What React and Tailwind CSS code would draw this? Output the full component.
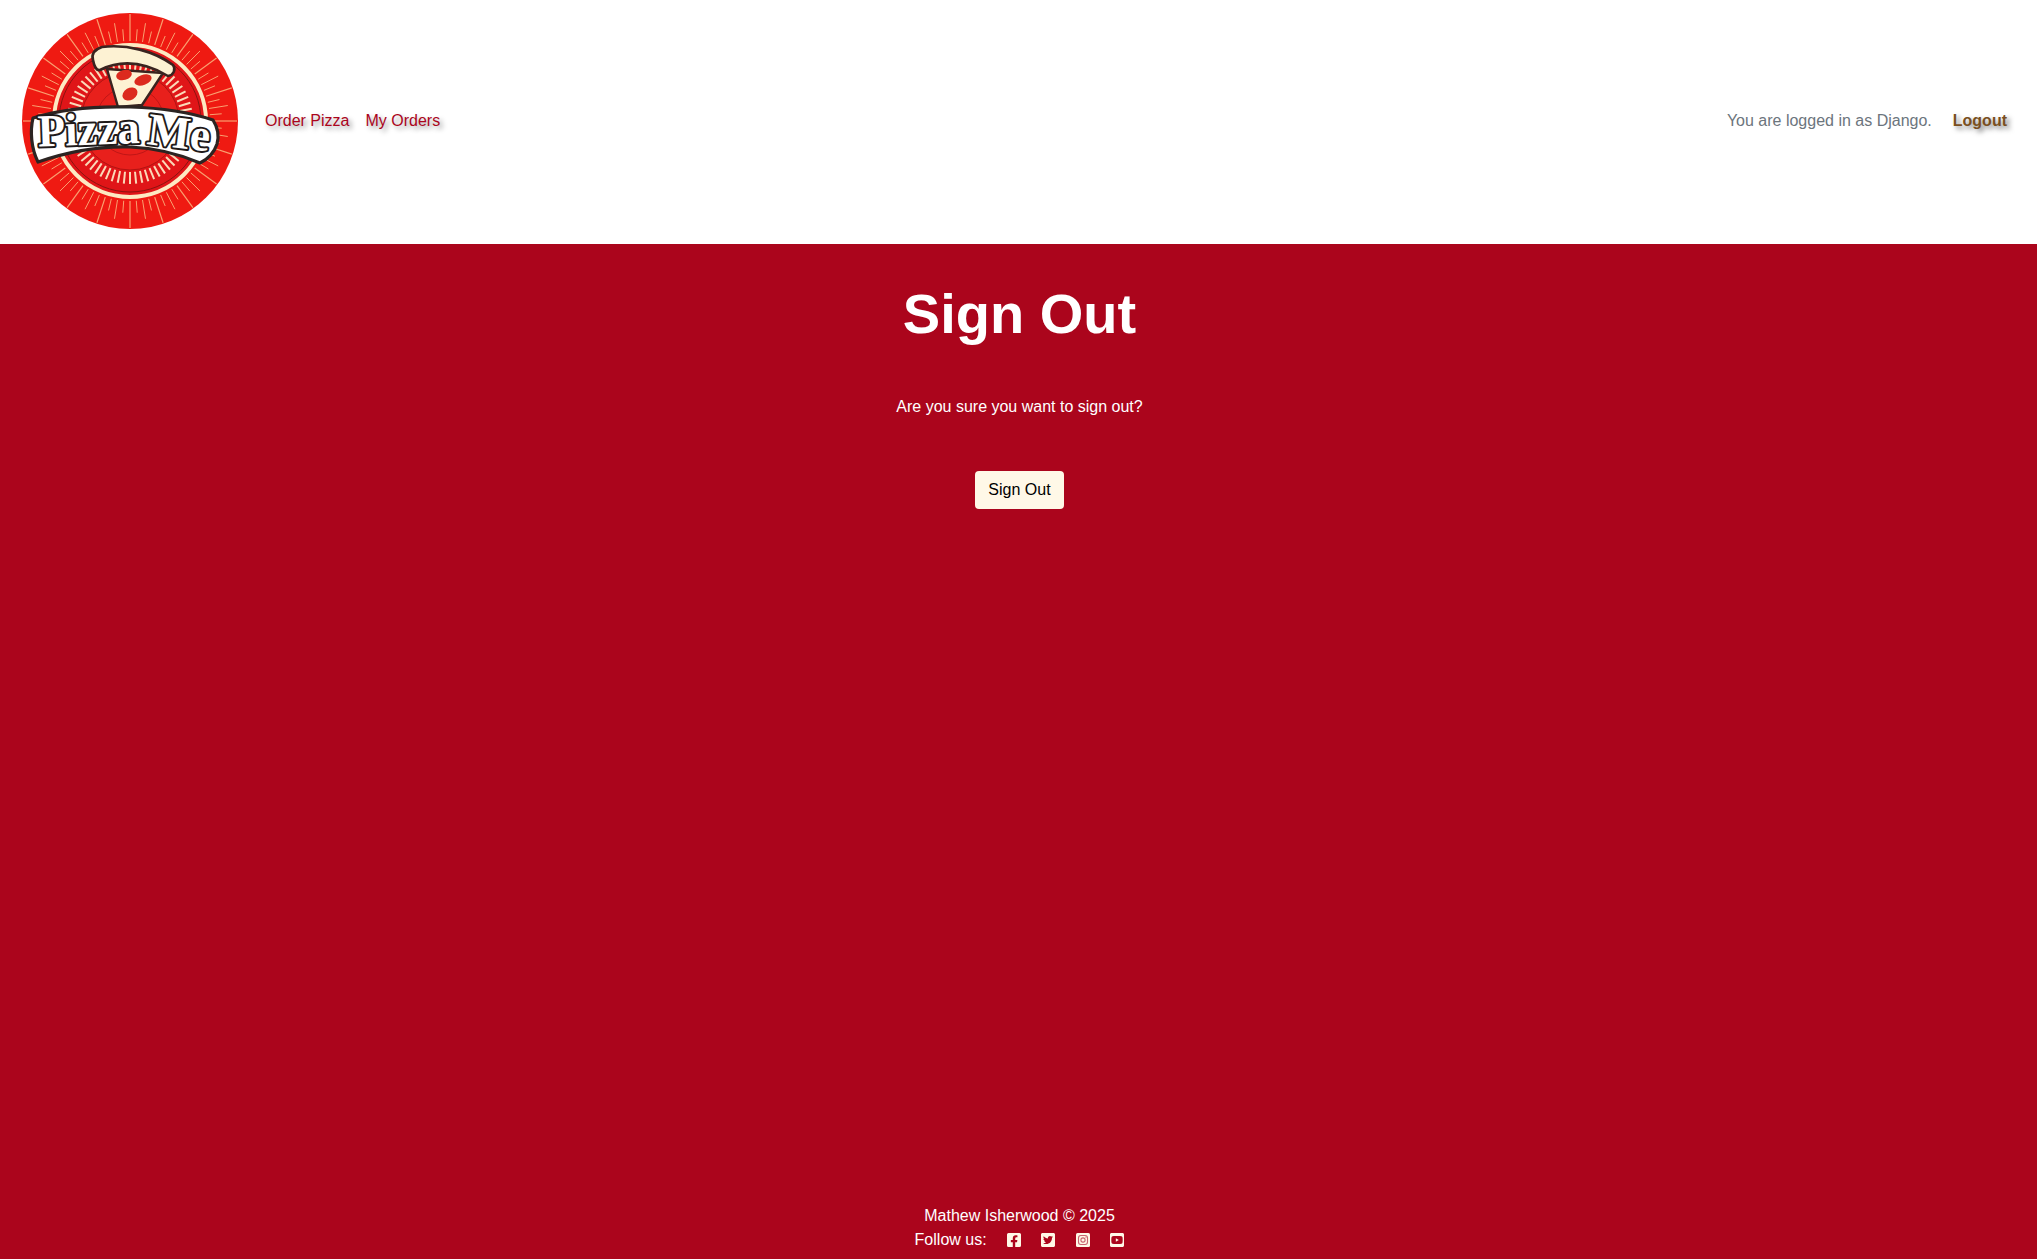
import React from "react";
import { FaFacebookSquare, FaTwitterSquare, FaYoutubeSquare } from "react-icons/fa";

function Insta() {
  return (
    <svg viewBox="0 0 14 14" className="w-[14px] h-[14px]">
      <rect width="14" height="14" rx="1.5" fill="#fff8e7" />
      <rect x="2.5" y="2.5" width="9" height="9" rx="2.4" fill="none" stroke="#c9626f" strokeWidth="1.1" />
      <circle cx="7" cy="7" r="2.1" fill="none" stroke="#c9626f" strokeWidth="1.1" />
      <circle cx="9.9" cy="4.1" r="0.6" fill="#c9626f" />
    </svg>
  );
}

function Logo() {
  const rays = [];
  for (let i = 0; i < 80; i++) {
    const a = (i * 4.5 * Math.PI) / 180;
    const long = i % 4 === 0;
    const mid = i % 2 === 0;
    const r1 = 80;
    const r2 = long ? 107 : mid ? 99 : 92;
    rays.push(
      <line key={i} x1={108 + r1 * Math.cos(a)} y1={108 + r1 * Math.sin(a)} x2={108 + r2 * Math.cos(a)} y2={108 + r2 * Math.sin(a)}
        stroke="#f9a070" strokeWidth={long ? 1.2 : 1} />
    );
  }
  const ticks = [];
  for (let i = 0; i < 64; i++) {
    const a = (i * 5.625 * Math.PI) / 180;
    ticks.push(
      <line key={i} x1={108 + 51 * Math.cos(a)} y1={108 + 51 * Math.sin(a)} x2={108 + 63 * Math.cos(a)} y2={108 + 63 * Math.sin(a)}
        stroke="#fbd9b8" strokeWidth="2" />
    );
  }
  return (
    <svg viewBox="0 0 216 216" className="w-[216px] h-[216px] shrink-0">
      <circle cx="108" cy="108" r="108" fill="#ef1a12" />
      {rays}
      <circle cx="108" cy="108" r="76" fill="#e01518" stroke="#fde9c2" strokeWidth="4" />
      <circle cx="108" cy="108" r="71" fill="none" stroke="#8a1410" strokeWidth="1" />
      {ticks}
      <circle cx="108" cy="108" r="49" fill="#e8201c" stroke="#b01412" strokeWidth="1" />
      <circle cx="108" cy="108" r="34" fill="none" stroke="#c01616" strokeWidth="1" />
      <path d="M85 56 L141 60 L120 92 L96 94 Z" fill="#fdf2d3" stroke="#3a2420" strokeWidth="2.4" strokeLinejoin="round" />
      <path d="M71 47 C69 40 74 36 80 34 C105 31 132 38 151 52 C154 56 152 62 146 63 C124 50 100 46 78 57 C74 58 72 52 71 47 Z" fill="#fdf2d3" stroke="#3a2420" strokeWidth="2.6" />
      <ellipse cx="102" cy="62" rx="8" ry="5" fill="#dc2a1e" transform="rotate(-15 102 62)" />
      <ellipse cx="121" cy="67" rx="9" ry="5" fill="#dc2a1e" transform="rotate(-20 121 67)" />
      <ellipse cx="108" cy="81" rx="8" ry="6" fill="#dc2a1e" transform="rotate(-30 108 81)" />
      <path d="M11 105 C40 96 75 93 108 94 C140 95 170 100 191 107 C196 115 197 124 195 131 C192 140 186 146 178 150 C155 140 132 135 108 134 C78 133 45 139 16 149 C9 135 8 118 11 105 Z" fill="#fff" stroke="#2c2422" strokeWidth="3.2" strokeLinejoin="round" />
      <g fontFamily="'Liberation Serif', serif" fontWeight="700" fill="#fff" stroke="#1f1a1a" strokeLinejoin="round" className="[paint-order:stroke]">
        <text x="16" y="132" fontSize="46" strokeWidth="4" textLength="102" lengthAdjust="spacingAndGlyphs" transform="rotate(-2 60 125)">Pizza</text>
        <text x="125" y="134" fontSize="46" strokeWidth="4" textLength="63" lengthAdjust="spacingAndGlyphs" transform="rotate(7 150 125)">Me</text>
      </g>
    </svg>
  );
}

export default function App() {
  return (
    <div className="min-h-[1259px] flex flex-col bg-[#ab051c] text-white text-base font-['Liberation_Sans',Arial,sans-serif]">
      <header className="h-[244px] bg-white flex items-center pl-[22px] pr-[30px] pb-[2px]">
        <Logo />
        <nav className="flex items-center gap-[16px] ml-[27px]">
          <a className="text-[#ab051c] [text-shadow:3px_3px_5px_rgba(0,0,0,0.4)]">Order Pizza</a>
          <a className="text-[#ab051c] [text-shadow:3px_3px_5px_rgba(0,0,0,0.4)]">My Orders</a>
        </nav>
        <div className="ml-auto flex items-center">
          <span className="text-[#6c757d]">You are logged in as Django.</span>
          <a className="ml-[21px] font-bold text-[#7a4f1e] [text-shadow:3px_3px_5px_rgba(0,0,0,0.5)]">Logout</a>
        </div>
      </header>
      <main className="flex-1 flex flex-col items-center pt-[35px] pl-[2px]">
        <h1 className="text-[56px] leading-[70px] font-bold">Sign Out</h1>
        <p className="mt-[46px] leading-[24px]">Are you sure you want to sign out?</p>
        <button className="mt-[52px] h-[38px] w-[89px] rounded-[4px] bg-[#fff8e7] text-black text-base">Sign Out</button>
      </main>
      <footer className="flex flex-col items-center pb-[7px] pl-[2px] leading-[24px] text-center">
        <p>Mathew Isherwood © 2025</p>
        <div className="flex items-center">
          <span>Follow us:</span>
          <div className="flex items-center gap-[20.6px] ml-[20px] text-[#fff8e7]">
            <FaFacebookSquare className="w-[14px] h-[16px]" />
            <FaTwitterSquare className="w-[14px] h-[16px]" />
            <Insta />
            <FaYoutubeSquare className="w-[14px] h-[16px]" />
          </div>
        </div>
      </footer>
    </div>
  );
}
